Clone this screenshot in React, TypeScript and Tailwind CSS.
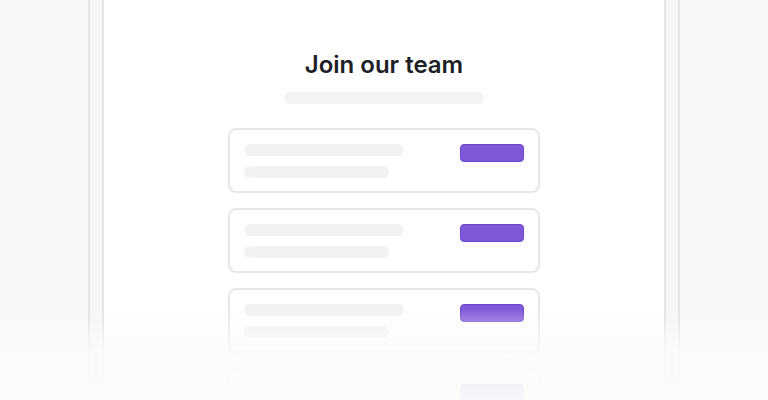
const jobs = [1, 2, 3, 4];

function JobCard() {
    return (
        <div className="flex h-[65px] w-[312px] shrink-0 items-start justify-between rounded-lg border-2 border-[#e7e7e7] bg-white pl-[14px] pr-[14px] pt-[14px]">
            <div className="flex flex-col gap-[10px]">
                <div className="h-[12px] w-[160px] rounded-full bg-[#f2f2f2]" />
                <div className="h-[12px] w-[145px] rounded-full bg-[#f2f2f2]" />
            </div>
            <div className="h-[18px] w-[64px] rounded-[4px] border border-[#6c48c9] bg-[#7f57d9]" />
        </div>
    );
}

export default function App() {
    return (
        <div
            className="relative flex h-[400px] w-full justify-center overflow-hidden bg-[#f8f8f8]"
            style={{ fontFamily: "Inter, 'Noto Sans', sans-serif" }}
        >
            <div className="flex h-[520px] w-[592px] border-x-2 border-[#e3e3e3] bg-[#f6f6f6] px-[12px]">
                <div className="flex flex-1 flex-col items-center border-x-2 border-[#e3e3e3] bg-white pt-[49px]">
                    <h1 className="text-[24px] font-semibold leading-[32px] text-[#1d2025]">
                        Join our team
                    </h1>
                    <div className="mt-[11px] h-[12px] w-[200px] rounded-full bg-[#f3f3f3]" />
                    <div className="mt-[24px] flex flex-col gap-[15px]">
                        {jobs.map((job) => (
                            <JobCard key={job} />
                        ))}
                    </div>
                </div>
            </div>
            <div className="pointer-events-none absolute inset-x-0 bottom-0 h-[92px] bg-linear-to-b from-[#fbfbfb]/0 via-[#fbfbfb]/90 to-[#fbfbfb]/97" />
        </div>
    );
}
